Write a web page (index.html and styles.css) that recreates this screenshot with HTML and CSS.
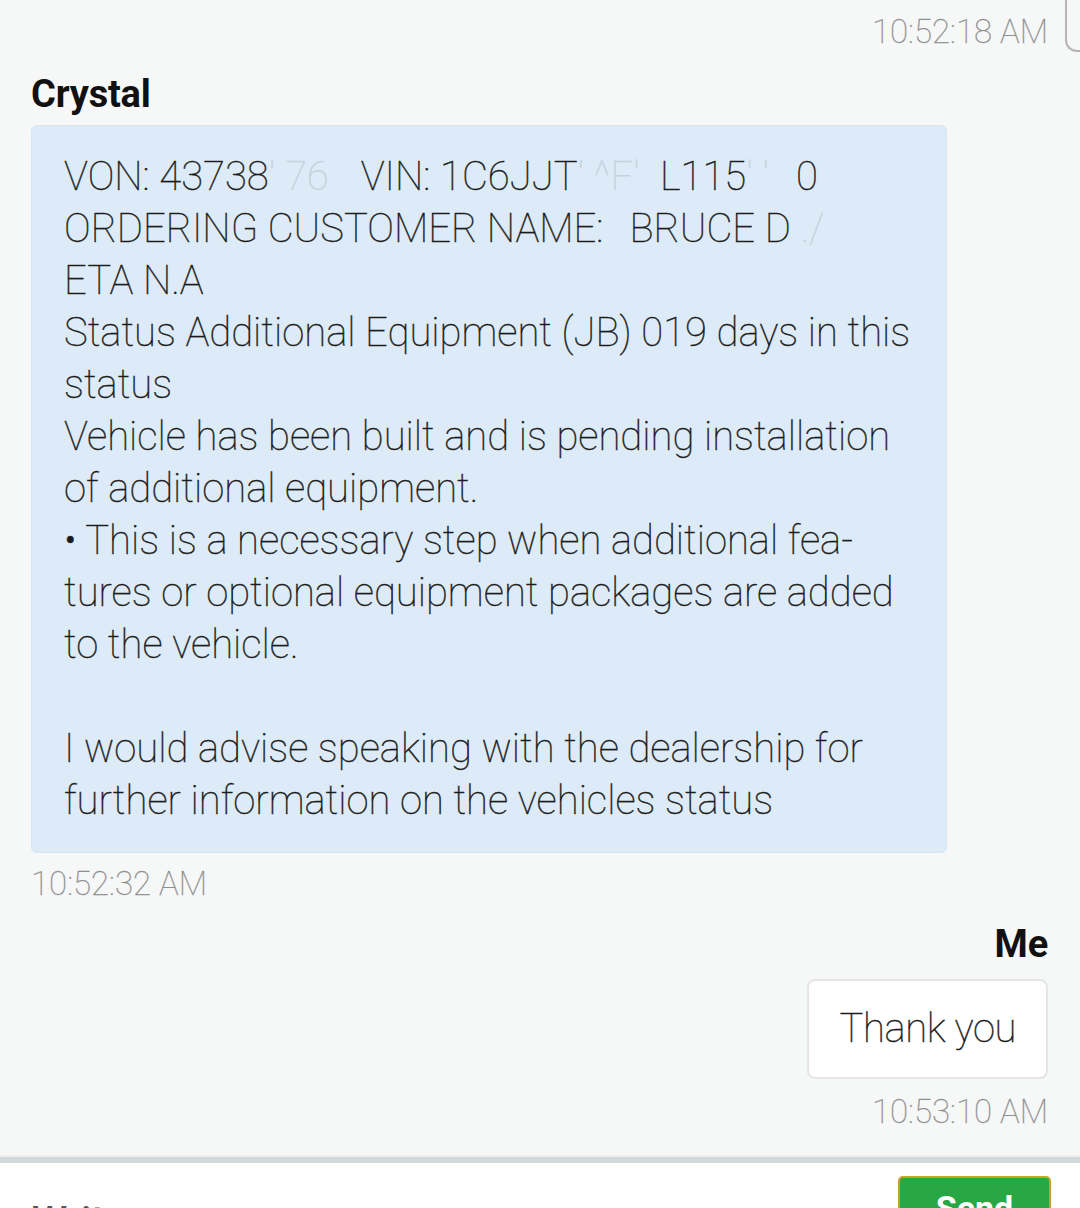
FILE: index.html
```html
<!DOCTYPE html>
<html>
<head>
<meta charset="utf-8">
<link rel="stylesheet" href="styles.css">
</head>
<body>
<div class="corner"></div>
<div class="chat">
  <div class="time time-right">10:52:18 AM</div>
  <div class="sender">Crystal</div>
  <div class="bubble-in">
    <div class="line">VON: 43738<span class="faint">' 76</span><span class="gap g1"></span>VIN: 1C6JJT<span class="faint">' ^F'</span><span class="gap g4"></span>L115<span class="faint">' '</span><span class="gap g2"></span>0</div>
    <div class="line">ORDERING CUSTOMER NAME:<span class="gap g3"></span>BRUCE D<span class="faint"> ./</span></div>
    <div class="line">ETA N.A</div>
    <div class="line">Status Additional Equipment (JB) 019 days in this</div>
    <div class="line">status</div>
    <div class="line">Vehicle has been built and is pending installation</div>
    <div class="line">of additional equipment.</div>
    <div class="line">• This is a necessary step when additional fea-</div>
    <div class="line">tures or optional equipment packages are added</div>
    <div class="line">to the vehicle.</div>
    <div class="line">&nbsp;</div>
    <div class="line">I would advise speaking with the dealership for</div>
    <div class="line">further information on the vehicles status</div>
  </div>
  <div class="time time-left">10:52:32 AM</div>
  <div class="sender sender-me">Me</div>
  <div class="out-row">
    <div class="bubble-out">Thank you</div>
  </div>
  <div class="time time-right time-out">10:53:10 AM</div>
</div>
<div class="footer">
  <div class="input">Write...</div>
  <button class="send">Send</button>
</div>
</body>
</html>
```
FILE: styles.css
```css
html, body {
  margin: 0;
  padding: 0;
}
body {
  background: #f6f7f7;
  font-family: Roboto, "Liberation Sans", sans-serif;
  width: 1080px;
  height: 1208px;
  overflow: hidden;
  position: relative;
}
.corner {
  position: absolute;
  left: 1065px;
  top: -10px;
  width: 40px;
  height: 60px;
  border-left: 2px solid #b5b5b5;
  border-bottom: 2px solid #b5b5b5;
  border-bottom-left-radius: 12px;
}
.chat {
  padding: 12px 32px 0 31px;
  display: flex;
  flex-direction: column;
}
.time {
  font-weight: 100;
  font-size: 33px;
  color: #8f8f8f;
  -webkit-text-stroke: 0.3px #8f8f8f;
  line-height: 40px;
  height: 40px;
}
.time-right {
  text-align: right;
}
.time-left {
  margin-top: 11px;
}
.time-out {
  margin-top: 13px;
}
.sender {
  font-size: 38px;
  font-weight: 700;
  color: #111;
  line-height: 44px;
  margin-top: 20px;
  letter-spacing: -0.2px;
}
.sender-me {
  text-align: right;
  margin-top: 18px;
}
.bubble-in {
  margin-top: 9px;
  width: 916px;
  box-sizing: border-box;
  background: #dcebf7;
  border: 1px solid #d6e5f1;
  border-radius: 6px;
  padding: 25px 20px 25px 32px;
  font-weight: 100;
  font-size: 40px;
  color: #1c1c1c;
  -webkit-text-stroke: 0.4px #1c1c1c;
  line-height: 52px;
}
.line {
  white-space: nowrap;
  height: 52px;
}
.faint {
  color: #c4d2dd;
  -webkit-text-stroke: 0.3px #c4d2dd;
}
.gap {
  display: inline-block;
}
.g1 { width: 32px; }
.g2 { width: 27px; }
.g3 { width: 26px; }
.g4 { width: 20px; }
.out-row {
  display: flex;
  justify-content: flex-end;
  margin-top: 13px;
}
.bubble-out {
  background: #ffffff;
  border: 2px solid #e3e5e7;
  border-radius: 8px;
  height: 100px;
  box-sizing: border-box;
  padding: 22px 30px 0 31px;
  font-weight: 100;
  font-size: 40px;
  letter-spacing: -0.4px;
  color: #1c1c1c;
  -webkit-text-stroke: 0.4px #1c1c1c;
  line-height: 52px;
}
.footer {
  margin-top: 25px;
  border-top: 6px solid #d4d9dc;
  box-shadow: 0 -2px 0 #eef0f0;
  background: #ffffff;
  height: 200px;
  display: flex;
  justify-content: space-between;
  align-items: flex-start;
  padding: 13px 29px 0 32px;
}
.input {
  margin-top: 22px;
  font-size: 40px;
  font-weight: 500;
  color: #555;
  line-height: 48px;
}
.send {
  width: 153px;
  height: 64px;
  background: #28a745;
  border: 2px solid #c9a227;
  border-radius: 5px;
  color: #fff;
  font-family: Roboto, "Liberation Sans", sans-serif;
  font-size: 34px;
  font-weight: 700;
  padding: 10px 0 0 0;
  line-height: 40px;
  display: flex;
  justify-content: center;
  align-items: flex-start;
}
```
